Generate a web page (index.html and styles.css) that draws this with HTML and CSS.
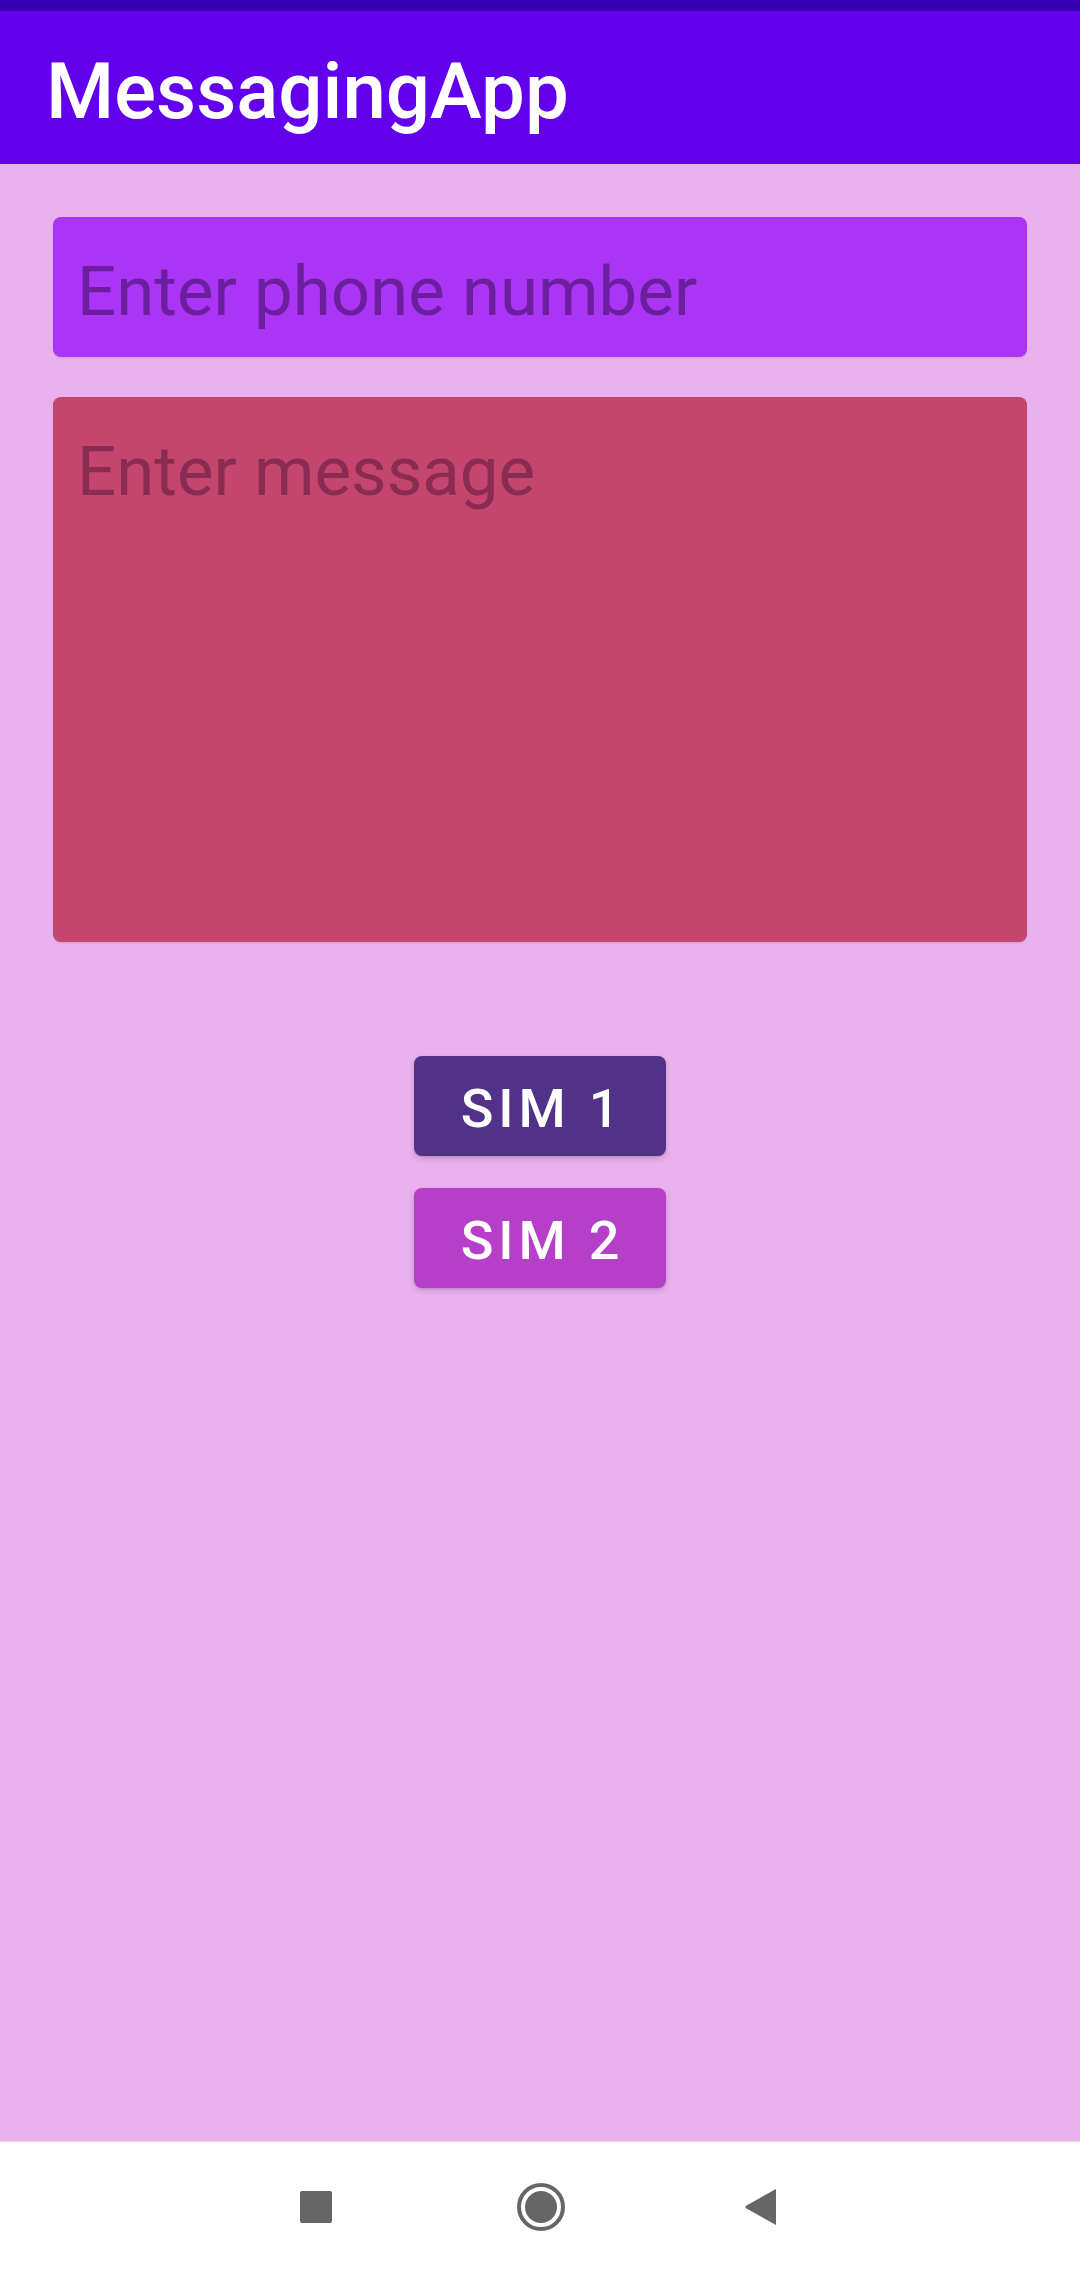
FILE: index.html
```html
<!DOCTYPE html>
<html>
<head>
<meta charset="utf-8">
<link rel="stylesheet" href="styles.css">
</head>
<body>
<div class="screen">
  <div class="status-bar"></div>
  <header class="app-bar"><h1 class="title">MessagingApp</h1></header>
  <main class="content">
    <div class="field phone"><span class="hint">Enter phone number</span></div>
    <div class="field message"><span class="hint">Enter message</span></div>
    <div class="buttons">
      <button class="btn sim1">SIM 1</button>
      <button class="btn sim2">SIM 2</button>
    </div>
  </main>
  <nav class="nav-bar">
    <svg class="nav-icon" width="64" height="64" viewBox="0 0 64 64"><rect x="16" y="16" width="32" height="32" rx="2" fill="#666666"/></svg>
    <svg class="nav-icon" width="64" height="64" viewBox="0 0 64 64"><circle cx="33" cy="32" r="22" fill="none" stroke="#666666" stroke-width="4"/><circle cx="33" cy="32" r="16" fill="#666666"/></svg>
    <svg class="nav-icon" width="64" height="64" viewBox="0 0 64 64"><path d="M44 14 L44 50 L14.5 33.6 Q12 32 14.5 30.4 Z" fill="#666666"/></svg>
  </nav>
</div>
</body>
</html>
```
FILE: styles.css
```css
html, body {
  margin: 0;
  padding: 0;
}
body {
  font-family: Roboto, "Noto Sans", sans-serif;
  background: #e9b1ee;
}
.screen {
  width: 1080px;
  height: 2271px;
  display: flex;
  flex-direction: column;
  background: #e9b1ee;
}
.status-bar {
  height: 11px;
  background: #3700b3;
}
.app-bar {
  height: 153px;
  background: #6200ee;
  box-sizing: border-box;
  padding: 35px 0 0 46px;
}
.title {
  margin: 0;
  font-size: 78px;
  font-weight: 500;
  line-height: normal;
  color: #ffffff;
}
.content {
  flex: 1;
  display: flex;
  flex-direction: column;
  padding: 53px 53px 0 53px;
}
.field {
  border-radius: 8px;
  box-sizing: border-box;
  padding: 34px 0 0 24px;
  box-shadow: 0 1px 2px rgba(0,0,0,0.12);
}
.phone {
  height: 140px;
  background: #ab35f5;
}
.message {
  height: 545px;
  margin-top: 40px;
  background: #c4466f;
}
.hint {
  display: block;
  font-size: 69px;
  line-height: 81px;
}
.phone .hint { color: #6b1e9e; }
.message .hint { color: #8a2b52; }
.buttons {
  display: flex;
  flex-direction: column;
  align-items: center;
  gap: 32px;
  margin-top: 114px;
}
.btn {
  width: 252px;
  height: 100px;
  border: none;
  border-radius: 8px;
  font-family: Roboto, sans-serif;
  font-size: 54px;
  font-weight: 500;
  letter-spacing: 0.09em;
  color: #ffffff;
  display: flex;
  align-items: center;
  justify-content: center;
  padding: 5px 0 0 5px;
  box-shadow: 0 3px 6px rgba(0,0,0,0.14), 0 1px 2px rgba(0,0,0,0.1);
}
.sim1 { background: #523189; }
.sim2 { background: #b53fc8; }
.nav-bar {
  height: 130px;
  background: #ffffff;
  border-top: 1px solid #e4d8e6;
  box-sizing: border-box;
  display: flex;
  align-items: center;
  padding-left: 284px;
  gap: 160px;
}
.nav-icon { display: block; }
```
